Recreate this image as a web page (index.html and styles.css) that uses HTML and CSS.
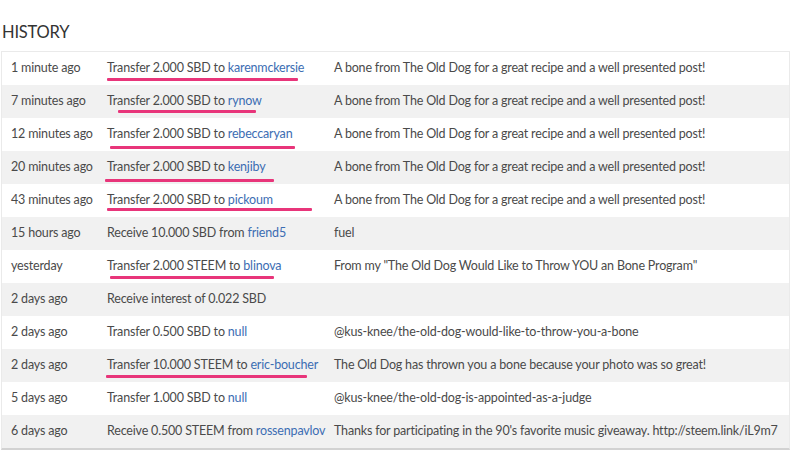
FILE: index.html
```html
<!DOCTYPE html>
<html lang="en">
<head>
<meta charset="utf-8">
<title>History</title>
<link rel="stylesheet" href="styles.css">
</head>
<body>
<h2 class="title">HISTORY</h2>
<div class="table">
  <div class="row">
    <div class="cell when">1 minute ago</div>
    <div class="cell op">Transfer 2.000 SBD to <a href="#">karenmckersie</a><span class="mark m1"></span></div>
    <div class="cell memo">A bone from The Old Dog for a great recipe and a well presented post!</div>
  </div>
  <div class="row">
    <div class="cell when">7 minutes ago</div>
    <div class="cell op">Transfer 2.000 SBD to <a href="#">rynow</a><span class="mark m2"></span></div>
    <div class="cell memo">A bone from The Old Dog for a great recipe and a well presented post!</div>
  </div>
  <div class="row">
    <div class="cell when">12 minutes ago</div>
    <div class="cell op">Transfer 2.000 SBD to <a href="#">rebeccaryan</a><span class="mark m3"></span></div>
    <div class="cell memo">A bone from The Old Dog for a great recipe and a well presented post!</div>
  </div>
  <div class="row">
    <div class="cell when">20 minutes ago</div>
    <div class="cell op">Transfer 2.000 SBD to <a href="#">kenjiby</a><span class="mark m4"></span></div>
    <div class="cell memo">A bone from The Old Dog for a great recipe and a well presented post!</div>
  </div>
  <div class="row">
    <div class="cell when">43 minutes ago</div>
    <div class="cell op">Transfer 2.000 SBD to <a href="#">pickoum</a><span class="mark m5"></span></div>
    <div class="cell memo">A bone from The Old Dog for a great recipe and a well presented post!</div>
  </div>
  <div class="row">
    <div class="cell when">15 hours ago</div>
    <div class="cell op">Receive 10.000 SBD from <a href="#">friend5</a></div>
    <div class="cell memo">fuel</div>
  </div>
  <div class="row">
    <div class="cell when">yesterday</div>
    <div class="cell op">Transfer 2.000 STEEM to <a href="#">blinova</a><span class="mark m7"></span></div>
    <div class="cell memo">From my "The Old Dog Would Like to Throw YOU an Bone Program"</div>
  </div>
  <div class="row">
    <div class="cell when">2 days ago</div>
    <div class="cell op">Receive interest of 0.022 SBD</div>
    <div class="cell memo"></div>
  </div>
  <div class="row">
    <div class="cell when">2 days ago</div>
    <div class="cell op">Transfer 0.500 SBD to <a href="#">null</a></div>
    <div class="cell memo">@kus-knee/the-old-dog-would-like-to-throw-you-a-bone</div>
  </div>
  <div class="row">
    <div class="cell when">2 days ago</div>
    <div class="cell op">Transfer 10.000 STEEM to <a href="#">eric-boucher</a><span class="mark m10"></span></div>
    <div class="cell memo">The Old Dog has thrown you a bone because your photo was so great!</div>
  </div>
  <div class="row">
    <div class="cell when">5 days ago</div>
    <div class="cell op">Transfer 1.000 SBD to <a href="#">null</a></div>
    <div class="cell memo">@kus-knee/the-old-dog-is-appointed-as-a-judge</div>
  </div>
  <div class="row">
    <div class="cell when">6 days ago</div>
    <div class="cell op">Receive 0.500 STEEM from <a href="#">rossenpavlov</a></div>
    <div class="cell memo">Thanks for participating in the 90's favorite music giveaway. http://steem.link/iL9m7</div>
  </div>
</div>
</body>
</html>
```

FILE: styles.css
```css
html, body {
  margin: 0;
  padding: 0;
  background: #fff;
}
body {
  font-family: "Source Sans Pro", Lato, "Noto Sans", sans-serif;
  color: #4a4a4a;
  overflow: hidden;
}
.title {
  margin: 0;
  padding: 22px 0 0 2px;
  height: 29px;
  font-size: 16.5px;
  font-weight: 400;
  line-height: 20px;
  letter-spacing: -0.2px;
  color: #333;
}
.table {
  margin-left: 1px;
  width: 789px;
  border: 1px solid #eaeaea;
  border-bottom: 2px solid #d2d2d2;
  box-sizing: border-box;
}
.row {
  display: grid;
  grid-template-columns: 96px 227px 1fr;
  height: 33px;
  align-items: center;
  font-size: 12.5px;
  letter-spacing: -0.18px;
}
.row:nth-child(even) {
  background: #f1f1f1;
}
.cell {
  position: relative;
  padding-left: 9px;
  white-space: nowrap;
  height: 33px;
  line-height: 31px;
}
a {
  color: #3c6db3;
  text-decoration: none;
}
.mark {
  position: absolute;
  height: 3px;
  border-radius: 1px;
  background: #e8357a;
}
.m1 { left: 9px; width: 191px; top: 26px; }
.m2 { left: 20px; width: 138px; top: 25px; }
.m3 { left: 12px; width: 185px; top: 28px; }
.m4 { left: 7px; width: 169px; top: 28px; }
.m5 { left: 9px; width: 205px; top: 24px; }
.m7 { left: 12px; width: 164px; top: 26px; }
.m10 { left: 8px; width: 201px; top: 26px; }
```
